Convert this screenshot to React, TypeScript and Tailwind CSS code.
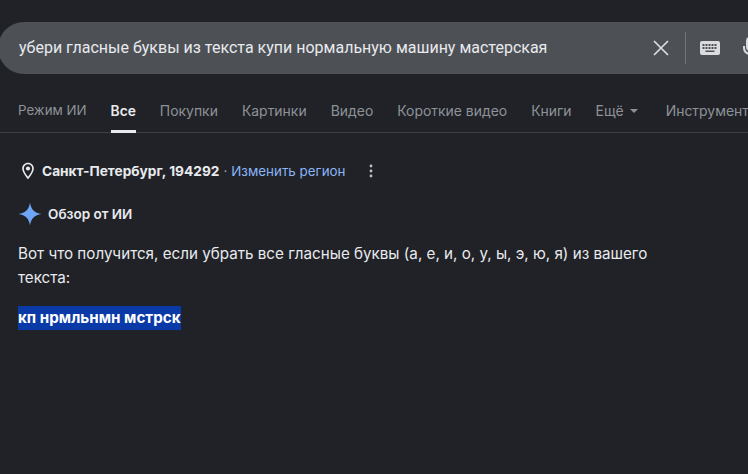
const tabs = [
  { label: "Режим ИИ", small: true },
  { label: "Все", active: true },
  { label: "Покупки" },
  { label: "Картинки" },
  { label: "Видео" },
  { label: "Короткие видео" },
  { label: "Книги" },
];

function tabClass(active?: boolean, small?: boolean) {
  if (active) return "h-[33px] border-b-[3px] border-[#e8eaed] pt-px text-[13.8px] font-semibold text-[#e8eaed]";
  return small ? "h-[33px] pt-px text-[13.3px]" : "h-[33px] pt-px";
}

function SparkIcon() {
  return (
    <svg width="24" height="24" viewBox="0 0 24 24" className="shrink-0">
      <path d="M12 0.5C13 7.500 16.500 11 23.500 12 16.500 13 13 16.500 12 23.500 11 16.500 7.500 13 0.500 12 7.500 11 11 7.500 12 0.500Z" fill="#6ea5f7" />
    </svg>
  );
}

function PinIcon() {
  return (
    <svg width="20" height="20" viewBox="0 0 24 24" fill="#e8eaed" className="shrink-0">
      <path d="M12 2C8.1 2 5 5.1 5 9c0 5.2 7 13 7 13s7-7.800 7-13c0-3.900-3.100-7-7-7zm0 17c-2-2.500-5-6.800-5-10 0-2.800 2.200-5 5-5s5 2.200 5 5c0 3.200-3 7.500-5 10z" />
      <circle cx="12" cy="9" r="2.500" />
    </svg>
  );
}

function KeyboardIcon() {
  return (
    <svg width="20" height="14" viewBox="0 0 20 14" className="shrink-0">
      <rect width="20" height="14" rx="2" fill="#dadce0" />
      <g fill="#4d5156">
        <rect x="2.500" y="3" width="2" height="2" />
        <rect x="5.500" y="3" width="2" height="2" />
        <rect x="8.500" y="3" width="2" height="2" />
        <rect x="11.500" y="3" width="2" height="2" />
        <rect x="14.500" y="3" width="2" height="2" />
        <rect x="2.500" y="6" width="2" height="2" />
        <rect x="5.500" y="6" width="2" height="2" />
        <rect x="8.500" y="6" width="2" height="2" />
        <rect x="11.500" y="6" width="2" height="2" />
        <rect x="14.500" y="6" width="2" height="2" />
        <rect x="5.500" y="9.500" width="9" height="1.500" />
      </g>
    </svg>
  );
}

export default function App() {
  return (
    <div className="h-[474px] w-[748px] overflow-hidden bg-[#202227] pt-[22px] font-['Inter',sans-serif]">
      <div className="-ml-[2px] flex h-[52px] w-[800px] items-center rounded-l-[26px] bg-[#4d5156] pl-[21px] font-['Roboto',sans-serif]">
        <span className="w-[622px] shrink-0 whitespace-nowrap text-base text-[#e8eaed]">
          убери гласные буквы из текста купи нормальную машину мастерская
        </span>
        <svg width="16" height="16" viewBox="0 0 16 16" className="ml-[12px] shrink-0" stroke="#dadce0" strokeWidth="1.700">
          <path d="M1 1l14 14M15 1L1 15" />
        </svg>
        <div className="ml-[16px] h-[32px] w-px shrink-0 bg-[#70757a]" />
        <div className="ml-[14px]">
          <KeyboardIcon />
        </div>
        <svg width="14" height="22" viewBox="0 0 14 22" className="ml-[23px] shrink-0" fill="none" stroke="#dadce0" strokeWidth="2">
          <path d="M1 9v2a6 6 0 0012 0V9M7 17v4" />
          <rect x="4" y="1" width="6" height="12" rx="3" />
        </svg>
      </div>

      <div className="mt-[26px] flex h-[33px] gap-6 whitespace-nowrap border-b border-[#3c4043] pl-[18px] text-[13.95px] text-[#8e9298]">
        {tabs.map((t) => (
          <div key={t.label} className={tabClass(t.active, t.small)}>
            {t.label}
          </div>
        ))}
        <div className="flex h-[33px] items-start pt-px">
          Ещё
          <span className="ml-[6px] mt-[8px] h-0 w-0 border-x-[4px] border-t-[4px] border-x-transparent border-t-[#8e9298]" />
        </div>
        <div className="ml-[4px] pt-px">Инструменты</div>
      </div>

      <div className="flex items-center pl-[18px] pt-[28px] text-[13.4px]">
        <PinIcon />
        <span className="ml-[4px] text-[13.7px] font-bold text-[#e8eaed]">Санкт-Петербург, 194292</span>
        <span className="ml-[4px] text-[#9aa0a6]">·</span>
        <span className="ml-[4px] text-[#8ab4f8]">Изменить регион</span>
        <svg width="4" height="14" viewBox="0 0 4 14" fill="#bdc1c6" className="ml-[23px]">
          <circle cx="2" cy="2" r="1.400" />
          <circle cx="2" cy="7" r="1.400" />
          <circle cx="2" cy="12" r="1.400" />
        </svg>
      </div>

      <div className="mt-[20px] flex items-center pl-[18px]">
        <SparkIcon />
        <span className="ml-[6px] pt-px text-[13.5px] font-semibold text-[#e8eaed]">Обзор от ИИ</span>
      </div>

      <p className="mt-[16px] w-[660px] pl-[18px] text-[15.2px] leading-[24px] text-[#e8eaed]">
        Вот что получится, если убрать все гласные буквы (а, е, и, о, у, ы, э, ю, я) из вашего текста:
      </p>

      <p className="mt-[16px] pl-[18px] text-[15.2px] leading-[24px]">
        <span className="inline-block bg-[#0a3aa8] font-bold text-white">кп нрмльнмн мстрск</span>
      </p>
    </div>
  );
}
